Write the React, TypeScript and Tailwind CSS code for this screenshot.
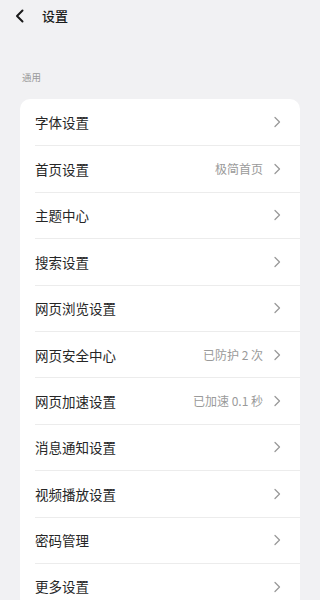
import React from 'react';

const rows: { label: string; value?: string }[] = [
  { label: '字体设置' },
  { label: '首页设置', value: '极简首页' },
  { label: '主题中心' },
  { label: '搜索设置' },
  { label: '网页浏览设置' },
  { label: '网页安全中心', value: '已防护 2 次' },
  { label: '网页加速设置', value: '已加速 0.1 秒' },
  { label: '消息通知设置' },
  { label: '视频播放设置' },
  { label: '密码管理' },
  { label: '更多设置' },
];

const Chevron = () => (
  <svg width="8" height="12" viewBox="0 0 8 12" fill="none">
    <path d="M2 1.5 L6.5 6 L2 10.5" stroke="#9a9a9a" strokeWidth="1.3" strokeLinecap="round" strokeLinejoin="round" />
  </svg>
);

const App = () => {
  return (
    <div
      className="min-h-[600px] w-[320px] bg-[#f1f1f3] overflow-hidden"
      style={{ fontFamily: '"Noto Sans CJK SC", "Noto Sans", sans-serif' }}
    >
      <div className="flex items-center h-[32px] pl-[14px]">
        <svg width="12" height="14" viewBox="0 0 12 14" fill="none">
          <path d="M8.5 1.5 L3 7 L8.5 12.5" stroke="#1a1a1a" strokeWidth="2" strokeLinecap="round" strokeLinejoin="round" />
        </svg>
        <span className="ml-[16px] text-[13px] font-medium text-[#1a1a1a]">设置</span>
      </div>

      <div className="pl-[22px] pt-[38px] pb-[15px] text-[9.5px] text-[#9a9a9a] leading-[14px]">通用</div>

      <div className="mx-[20px] bg-white rounded-[10px] overflow-hidden">
        {rows.map((row, i) => (
          <div key={row.label} className="pl-[15px]">
            <div
              className={`flex items-center h-[46.4px] pr-[19px] ${i > 0 ? 'border-t border-[#ececec]' : ''}`}
            >
              <span className="flex-1 text-[13.5px] text-[#262626]">{row.label}</span>
              {row.value && (
                <span className="mr-[10px] text-[12px] text-[#9a9a9a]">{row.value}</span>
              )}
              <Chevron />
            </div>
          </div>
        ))}
      </div>
    </div>
  );
};

export default App;
